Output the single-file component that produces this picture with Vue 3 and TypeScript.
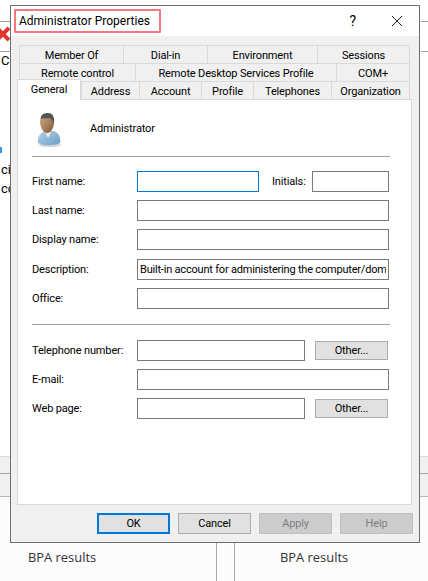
<template>
  <div class="desktop">
    <!-- what peeks out behind the dialog -->
    <div class="bg-line left-a"></div>
    <div class="bg-line left-b"></div>
    <div class="bg-line right-a"></div>
    <div class="bg-line right-b"></div>
    <svg class="bg-x" width="10" height="16" viewBox="0 0 10 16">
      <path d="M-3 2 L9 14 M9 2 L-3 14" stroke="#e2352f" stroke-width="4" fill="none" />
    </svg>
    <span class="bg-text c1">C</span>
    <i class="bg-mark"></i>
    <span class="bg-text c2">ci</span>
    <span class="bg-text c3">cc</span>
    <div class="bg-band"></div>
    <div class="bg-foot">
      <span class="bpa one">BPA results</span>
      <i class="vline v1"></i>
      <i class="vline v2"></i>
      <span class="bpa two">BPA results</span>
    </div>

    <div class="dialog">
      <header class="titlebar">
        <span class="title">Administrator Properties</span>
        <span class="help-glyph">?</span>
        <svg class="close" width="12" height="12" viewBox="0 0 12 12">
          <path d="M1 1 L11 11 M11 1 L1 11" stroke="#222" stroke-width="1" fill="none" />
        </svg>
      </header>

      <div class="body">
        <div class="tabs">
          <div v-for="(row, r) in tabRows" :key="r" class="tab-row">
            <div
              v-for="t in row"
              :key="t.label"
              class="tab"
              :class="{ active: t.active }"
              :style="{ width: t.w + 'px' }"
            >{{ t.label }}</div>
          </div>
        </div>

        <section class="panel">
          <div class="user">
            <svg class="avatar" width="26" height="34" viewBox="0 0 26 34">
              <defs>
                <linearGradient id="skin" x1="0" x2="1" y1="0" y2="1">
                  <stop offset="0" stop-color="#d8b08a" />
                  <stop offset="1" stop-color="#7d5636" />
                </linearGradient>
                <linearGradient id="shirt" x1="0" x2="1" y1="0" y2="1">
                  <stop offset="0" stop-color="#b4d4ec" />
                  <stop offset="1" stop-color="#6a9cc6" />
                </linearGradient>
              </defs>
              <ellipse cx="14" cy="32" rx="11" ry="2" fill="#d4d4d4" />
              <path d="M2 30 C1 24 4 20 9 18 L18 18 C23 20 25 25 24 30 C18 33 8 33 2 30 Z" fill="url(#shirt)" />
              <path d="M9 18 L12 25 L15 19 Z" fill="#eef2f6" />
              <path d="M4 8 C4 3 8 1 12 1 C16 1 18 4 18 9 C18 15 15 20 11 20 C7 20 4 14 4 8 Z" fill="url(#skin)" />
              <path d="M5 6 C4 2 8 0 12 0 C16 0 19 3 18 11 C17 8 15 5 13 5 C10 6 7 5 5 6 Z" fill="#555" />
            </svg>
            <span class="user-name">Administrator</span>
          </div>
          <hr class="rule" />

          <div class="form first-block">
            <label>First name:</label>
            <div class="split">
              <input class="focused w-first" type="text" />
              <label class="initials">Initials:</label>
              <input class="w-init" type="text" />
            </div>
            <label>Last name:</label>
            <input type="text" />
            <label>Display name:</label>
            <input type="text" />
            <label class="nudge">Description:</label>
            <input class="nudge" type="text" value="Built-in account for administering the computer/domain" />
            <label class="nudge">Office:</label>
            <input class="nudge" type="text" />
          </div>
          <hr class="rule rule-two" />

          <div class="form">
            <label>Telephone number:</label>
            <div class="split">
              <input class="w-short" type="text" />
              <button class="btn other">Other...</button>
            </div>
            <label>E-mail:</label>
            <input type="text" />
            <label>Web page:</label>
            <div class="split">
              <input class="w-short" type="text" />
              <button class="btn other">Other...</button>
            </div>
          </div>
        </section>

        <footer class="actions">
          <button class="btn primary">OK</button>
          <button class="btn">Cancel</button>
          <button class="btn off">Apply</button>
          <button class="btn off">Help</button>
        </footer>
      </div>

      <div class="annot"></div>
    </div>
  </div>
</template>

<script setup lang="ts">
interface Tab {
  label: string
  w: number
  active?: boolean
}

const tabRows: Tab[][] = [
  [
    { label: 'Member Of', w: 104 },
    { label: 'Dial-in', w: 84 },
    { label: 'Environment', w: 110 },
    { label: 'Sessions', w: 93 },
  ],
  [
    { label: 'Remote control', w: 116 },
    { label: 'Remote Desktop Services Profile', w: 201 },
    { label: 'COM+', w: 74 },
  ],
  [
    { label: 'General', w: 64, active: true },
    { label: 'Address', w: 58 },
    { label: 'Account', w: 62 },
    { label: 'Profile', w: 52 },
    { label: 'Telephones', w: 78 },
    { label: 'Organization', w: 79 },
  ],
]
</script>

<style>
html,
body {
  margin: 0;
  background: #fff;
}
</style>

<style scoped>
.desktop {
  position: relative;
  width: 428px;
  height: 581px;
  overflow: hidden;
  background: #fff;
  font-family: Roboto, "Liberation Sans", sans-serif;
  color: #000;
}

.bg-line {
  position: absolute;
  height: 1px;
  background: #a0a0a0;
}
.left-a { left: 0; top: 21px; width: 10px; }
.left-b { left: 0; top: 51px; width: 10px; }
.right-a { left: 421px; top: 21px; width: 7px; }
.right-b { left: 421px; top: 51px; width: 7px; }

.bg-x {
  position: absolute;
  left: 0;
  top: 26px;
}
.bg-mark {
  position: absolute;
  left: 0;
  top: 147px;
  width: 2px;
  height: 6px;
  background: #3a96dd;
}
.bg-text {
  position: absolute;
  left: 1px;
  font-size: 13px;
  line-height: 14px;
}
.c1 { top: 54px; }
.c2 { top: 163px; }
.c3 { top: 182px; }

.bg-band {
  position: absolute;
  left: 0;
  top: 456px;
  width: 428px;
  height: 41px;
  background: #f0f0f0;
  border-top: 1px solid #dcdcdc;
  border-bottom: 1px solid #b5b5b5;
  box-sizing: border-box;
}
.bg-band::after {
  content: "";
  position: absolute;
  left: 0;
  right: 0;
  top: 16px;
  height: 1px;
  background: #a8a8a8;
}
.bg-foot {
  position: absolute;
  left: 0;
  top: 497px;
  width: 428px;
  height: 84px;
  background: #fcfcfc;
}
.bpa {
  position: absolute;
  top: 52px;
  font-family: "Open Sans", sans-serif;
  font-size: 12.9px;
  line-height: 17px;
  color: #333;
}
.one { left: 28px; }
.two { left: 280px; }
.vline {
  position: absolute;
  top: 0;
  bottom: 0;
  width: 1px;
  background: #a8a8a8;
}
.v1 { left: 216px; }
.v2 { left: 234px; }

.dialog {
  position: absolute;
  left: 10px;
  top: 5px;
  width: 410px;
  height: 538px;
  box-sizing: border-box;
  border: 1px solid #6e6e6e;
  display: flex;
  flex-direction: column;
  background: #f0f0f0;
  letter-spacing: -0.15px;
}

.titlebar {
  height: 30px;
  flex: none;
  background: #fff;
  display: flex;
  align-items: center;
  padding-left: 8px;
}
.title {
  font-size: 12px;
  letter-spacing: 0;
  flex: 1;
}
.help-glyph {
  font-size: 14px;
  margin-right: 35px;
}
.close {
  margin-right: 16px;
}

.annot {
  position: absolute;
  left: 3px;
  top: 3px;
  width: 147px;
  height: 24px;
  box-sizing: border-box;
  border: 2px solid #f5777f;
  border-radius: 1px;
}

.body {
  flex: 1;
  display: flex;
  flex-direction: column;
  padding: 9px 0 0 6px;
}

.tabs {
  display: flex;
  flex-direction: column;
  padding-left: 2px;
}
.tab-row {
  display: flex;
  height: 18px;
}
.tab {
  box-sizing: border-box;
  height: 18px;
  background: #f0f0f0;
  border-top: 1px solid #d9d9d9;
  border-left: 1px solid #d9d9d9;
  font-size: 11px;
  line-height: 19px;
  text-align: center;
  white-space: nowrap;
}
.tab:last-child {
  border-right: 1px solid #d9d9d9;
}
.tab.active {
  position: relative;
  margin-left: -2px;
  margin-top: -2px;
  height: 21px;
  background: #fff;
  border: 1px solid #d9d9d9;
  border-bottom: 0;
  z-index: 1;
}

.panel {
  box-sizing: border-box;
  width: 395px;
  height: 406px;
  background: #fff;
  border: 1px solid #d9d9d9;
  padding: 0 21px 0 14px;
}

.user {
  height: 56px;
  display: flex;
  align-items: center;
  padding-left: 4px;
}
.avatar {
  margin-right: 28px;
  margin-top: 3px;
}
.user-name {
  font-size: 11px;
}

.rule {
  margin: 0;
  border: 0;
  height: 1px;
  background: #a0a0a0;
}
.first-block {
  margin-top: 14px;
}
.rule-two {
  margin: 16px 0 15px;
}

.form {
  display: grid;
  grid-template-columns: 105px 252px;
  grid-auto-rows: 21px;
  row-gap: 8px;
  align-items: center;
}
.form label {
  font-size: 11px;
}
.nudge {
  position: relative;
  top: 1px;
}
.form input {
  box-sizing: border-box;
  width: 100%;
  height: 21px;
  border: 1px solid #7a7a7a;
  background: #fff;
  padding: 0 2px;
  margin: 0;
  outline: 0;
  font-family: inherit;
  font-size: 11px;
  letter-spacing: -0.2px;
  color: #000;
}
.form input.focused {
  border-color: #0078d7;
}
.split {
  display: flex;
  align-items: center;
  height: 21px;
}
.form input.w-first { width: 122px; }
.form input.w-init { width: 77px; }
.form input.w-short { width: 168px; margin-right: 10px; }
.form .initials {
  margin-left: 13px;
  width: 40px;
}

.btn {
  box-sizing: border-box;
  width: 73px;
  height: 21px;
  margin: 0;
  padding: 0 0 1px;
  background: #e1e1e1;
  border: 1px solid #adadad;
  font-family: inherit;
  font-size: 11px;
  letter-spacing: -0.15px;
  color: #000;
}
.btn.other {
  height: 19px;
}
.btn.primary {
  border: 2px solid #0078d7;
}
.btn.off {
  background: #cccccc;
  border-color: #bfbfbf;
  color: #7f7f7f;
}
.actions {
  display: flex;
  gap: 8px;
  padding: 8px 0 0 80px;
}
</style>
